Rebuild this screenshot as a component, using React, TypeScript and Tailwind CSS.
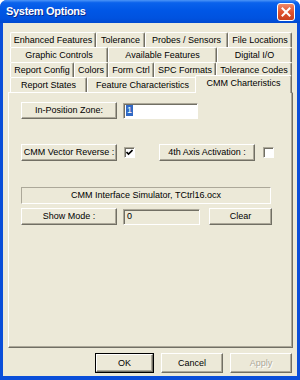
import React from "react";

const font = { fontFamily: '"Liberation Sans", Arial, sans-serif' };

type Tab = { label: string; w: number };

const rows: Tab[][] = [
  [
    { label: "Enhanced Features", w: 86 },
    { label: "Tolerance", w: 49 },
    { label: "Probes / Sensors", w: 83 },
    { label: "File Locations", w: 64 },
  ],
  [
    { label: "Graphic Controls", w: 98 },
    { label: "Available Features", w: 109 },
    { label: "Digital I/O", w: 75 },
  ],
  [
    { label: "Report Config", w: 64 },
    { label: "Colors", w: 34 },
    { label: "Form Ctrl", w: 46 },
    { label: "SPC Formats", w: 62 },
    { label: "Tolerance Codes", w: 76 },
  ],
];

function TabRow({ tabs }: { tabs: Tab[] }) {
  return (
    <div className="flex h-[15px] ml-[2px]">
      {tabs.map((t) => (
        <div
          key={t.label}
          style={{ width: t.w }}
          className="h-[15px] flex items-center justify-center border-t border-l border-r border-t-white border-l-white border-r-[#716f64] rounded-t-[2px] shadow-[inset_-1px_0_0_#aca899] text-[9px] leading-none text-black whitespace-nowrap"
        >
          {t.label}
        </div>
      ))}
    </div>
  );
}

function Btn({ children, className = "" }: { children: React.ReactNode; className?: string }) {
  return (
    <div
      className={
        "h-[17px] flex items-center justify-center border border-t-white border-l-white border-r-[#716f64] border-b-[#716f64] shadow-[inset_-1px_-1px_0_#aca899] bg-[#ece9d8] text-[9px] leading-none text-black whitespace-nowrap " +
        className
      }
    >
      {children}
    </div>
  );
}

function Check({ checked }: { checked?: boolean }) {
  return (
    <div className="w-[11px] h-[11px] bg-white border border-t-[#aca899] border-l-[#aca899] border-r-white border-b-white shadow-[inset_1px_1px_0_#716f64] flex items-center justify-center">
      {checked && (
        <svg width="7" height="7" viewBox="0 0 7 7">
          <path d="M0.5 3 L2.5 5 L6.5 1" stroke="#000" strokeWidth="1.6" fill="none" />
        </svg>
      )}
    </div>
  );
}

export default function App() {
  return (
    <div style={font} className="w-[300px] h-[380px] flex flex-col bg-[#0a4ed9] rounded-t-[7px] overflow-hidden">
      {/* title bar */}
      <div className="h-[23px] shrink-0 flex items-center justify-between pl-[6px] pr-[5px] bg-[linear-gradient(to_bottom,#4c95f7_0%,#0a62ec_12%,#0057e6_45%,#0052df_80%,#0049d0_100%)]">
        <span className="text-white font-bold text-[11px] leading-none tracking-[-0.3px] [text-shadow:1px_1px_0_#0a2a8a]">
          System Options
        </span>
        <div className="w-[18px] h-[18px] rounded-[3px] border border-white bg-[linear-gradient(to_bottom,#f08a6a,#e0522f_50%,#c8401f)] flex items-center justify-center">
          <svg width="10" height="10" viewBox="0 0 10 10">
            <path d="M1.5 1.5 L8.5 8.5 M8.5 1.5 L1.5 8.5" stroke="#fff" strokeWidth="2" strokeLinecap="square" />
          </svg>
        </div>
      </div>
      {/* body */}
      <div className="flex-1 mx-[3px] mb-[4px] bg-[#ece9d8] flex flex-col px-[5px] pt-[9px]">
        {rows.map((r, i) => (
          <TabRow key={i} tabs={r} />
        ))}
        {/* row 4 with selected tab */}
        <div className="flex h-[15px] ml-[2px] items-end relative z-10">
          <div className="w-[77px] h-[15px] flex items-center justify-center border-t border-l border-r border-t-white border-l-white border-r-[#716f64] rounded-t-[2px] shadow-[inset_-1px_0_0_#aca899] text-[9px] leading-none whitespace-nowrap">
            Report States
          </div>
          <div className="w-[110px] h-[15px] flex items-center justify-center border-t border-l border-t-white border-l-white rounded-t-[2px] text-[9px] leading-none whitespace-nowrap">
            Feature Characteristics
          </div>
          <div className="w-[97px] h-[18px] -mb-[1px] -ml-[2px] bg-[#ece9d8] flex items-start pt-[3px] justify-center border-t border-l border-r border-t-white border-l-white border-r-[#716f64] rounded-t-[2px] shadow-[inset_-1px_0_0_#aca899] text-[9px] leading-none whitespace-nowrap">
            CMM Charteristics
          </div>
        </div>
        {/* panel */}
        <div className="w-[285px] h-[256px] border border-t-white border-l-white border-r-[#716f64] border-b-[#716f64] shadow-[inset_-1px_-1px_0_#aca899] flex flex-col pl-[12px] pt-[9px]">
          <div className="flex items-center gap-[6px]">
            <Btn className="w-[96px]">In-Position Zone:</Btn>
            <div className="w-[75px] h-[16px] bg-white border border-t-[#aca899] border-l-[#aca899] border-r-white border-b-white shadow-[inset_1px_1px_0_#716f64] flex items-center pl-[2px]">
              <span className="bg-[#316ac5] text-white text-[9px] leading-[11px] px-[1px]">1</span>
            </div>
          </div>
          <div className="flex items-center mt-[25px]">
            <Btn className="w-[96px]">CMM Vector Reverse :</Btn>
            <div className="ml-[7px]">
              <Check checked />
            </div>
            <Btn className="w-[96px] ml-[24px]">4th Axis Activation :</Btn>
            <div className="ml-[8px]">
              <Check />
            </div>
          </div>
          <div className="mt-[26px] w-[250px] h-[17px] border border-t-[#aca899] border-l-[#aca899] border-r-white border-b-white flex items-center justify-center text-[9px] leading-none whitespace-nowrap">
            CMM Interface Simulator, TCtrl16.ocx
          </div>
          <div className="flex items-center mt-[4px]">
            <Btn className="w-[96px]">Show Mode :</Btn>
            <div className="ml-[6px] w-[77px] h-[16px] border border-t-[#aca899] border-l-[#aca899] border-r-white border-b-white shadow-[inset_1px_1px_0_#716f64] flex items-center pl-[3px] text-[9px] leading-none">
              0
            </div>
            <Btn className="w-[63px] ml-[9px]">Clear</Btn>
          </div>
        </div>
        {/* bottom buttons */}
        <div className="flex justify-end mt-[5px] pr-[0px]">
          <div className="w-[59px] h-[20px] border border-black">
            <Btn className="w-full !h-[18px]">OK</Btn>
          </div>
          <Btn className="w-[62px] !h-[20px] ml-[7px]">Cancel</Btn>
          <Btn className="w-[62px] !h-[20px] ml-[7px] !text-[#aca899] [text-shadow:1px_1px_0_#fff]">Apply</Btn>
        </div>
      </div>
    </div>
  );
}
